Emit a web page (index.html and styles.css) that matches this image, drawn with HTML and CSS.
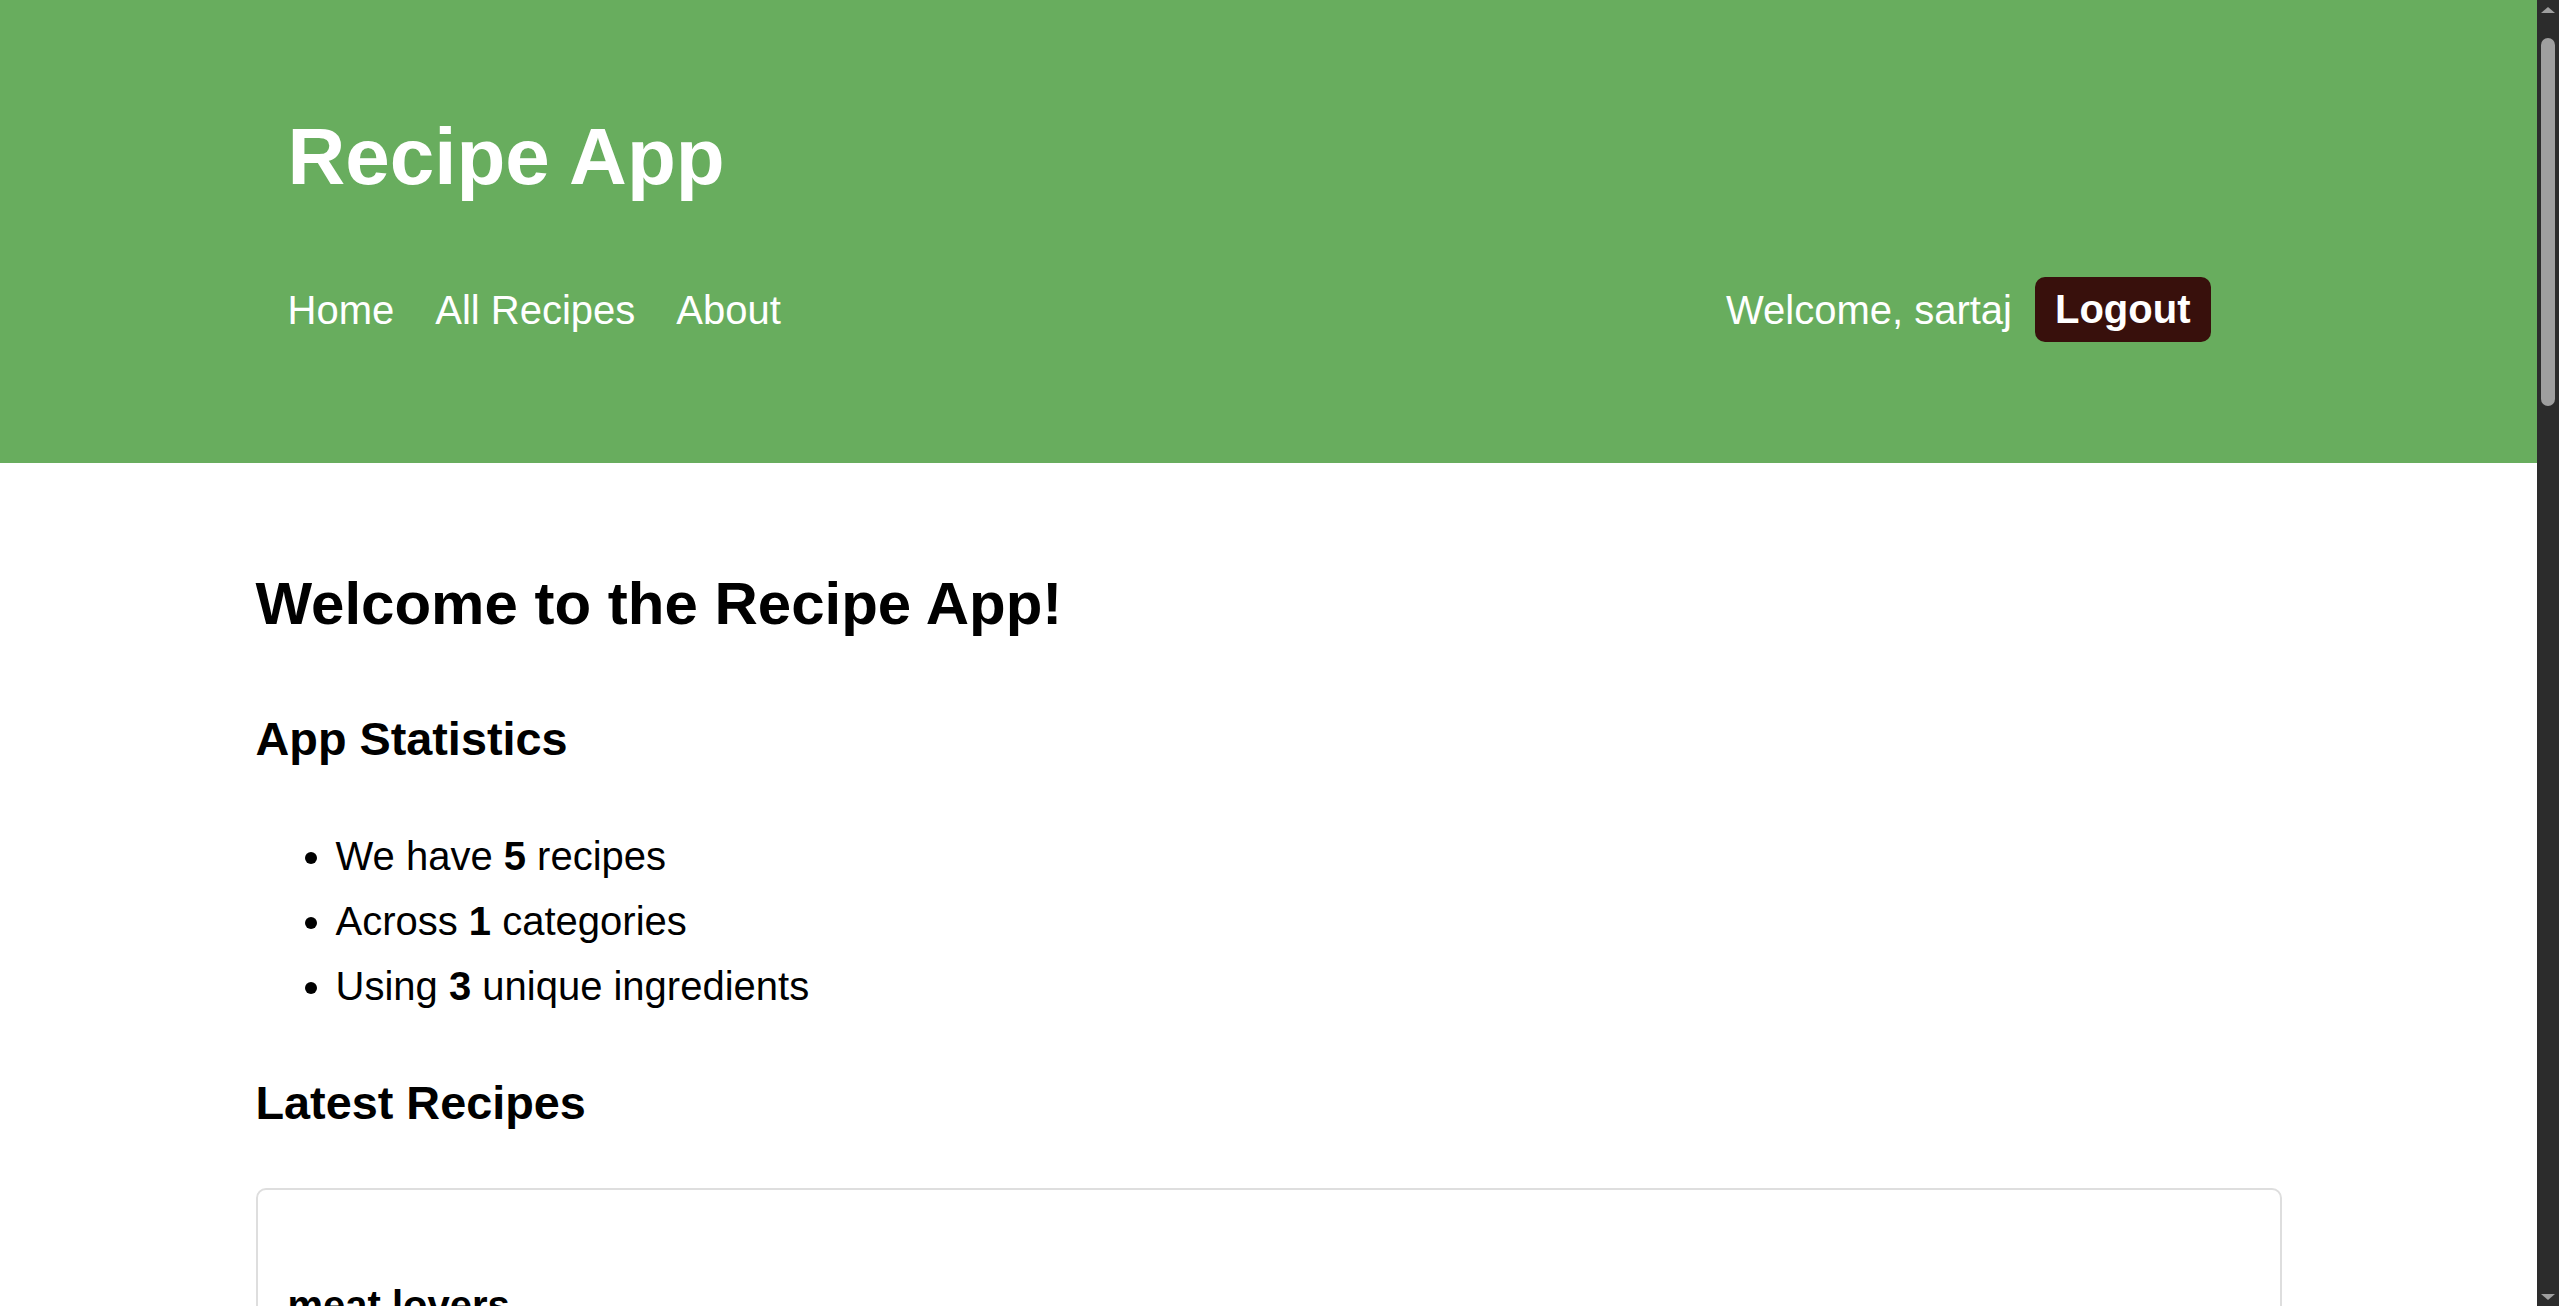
FILE: index.html
```html
<!DOCTYPE html>
<html lang="en">
<head>
<meta charset="utf-8">
<title>Recipe App</title>
<link rel="stylesheet" href="styles.css">
</head>
<body>
<header class="site-header">
  <div class="header-inner">
    <h1 class="brand">Recipe App</h1>
    <nav class="nav">
      <ul class="nav-links">
        <li><a href="#">Home</a></li>
        <li><a href="#">All Recipes</a></li>
        <li><a href="#">About</a></li>
      </ul>
      <div class="user-box">
        <span class="welcome">Welcome, sartaj</span>
        <button class="logout" type="button">Logout</button>
      </div>
    </nav>
  </div>
</header>
<main class="container">
  <h2 class="page-title">Welcome to the Recipe App!</h2>
  <h3 class="section-title">App Statistics</h3>
  <ul class="stats">
    <li>We have <strong>5</strong> recipes</li>
    <li>Across <strong>1</strong> categories</li>
    <li>Using <strong>3</strong> unique ingredients</li>
  </ul>
  <h3 class="section-title">Latest Recipes</h3>
  <div class="recipe-list">
    <article class="recipe-card">
      <h4 class="recipe-name">meat lovers</h4>
      <p class="recipe-desc">A hearty recipe.</p>
    </article>
  </div>
</main>
<div class="fake-scrollbar" aria-hidden="true">
  <span class="sb-arrow sb-up"></span>
  <span class="sb-thumb"></span>
  <span class="sb-arrow sb-down"></span>
</div>
</body>
</html>
```

FILE: styles.css
```css
html, body {
  margin: 0;
  padding: 0;
}

body {
  font-family: "Liberation Sans", Arial, sans-serif;
  font-size: 40px;
  line-height: 1.6;
  color: #000;
  background: #fff;
  padding-right: 22px;
}

.site-header {
  background: #68ad5e;
  color: #fff;
  padding: 40px 0 121px;
}

.header-inner {
  max-width: 2026px;
  margin: 0 auto;
  padding: 0 71px 0 32px;
  box-sizing: border-box;
}

.brand {
  font-size: 80px;
  font-weight: bold;
  margin: 53px 0 56px;
}

.nav {
  display: flex;
  align-items: center;
  justify-content: space-between;
}

.nav-links {
  list-style: none;
  margin: 0;
  padding: 0;
  display: flex;
  gap: 41px;
}

.nav-links a {
  color: #fff;
  text-decoration: none;
}

.user-box {
  display: flex;
  align-items: center;
  gap: 23px;
}

.logout {
  font-family: inherit;
  font-size: 40px;
  font-weight: bold;
  line-height: normal;
  color: #fff;
  background: #38100c;
  border: none;
  border-radius: 10px;
  padding: 10px 20px;
}

.container {
  max-width: 2026px;
  margin: 0 auto;
  padding-top: 43px;
}

.page-title {
  font-size: 60px;
  margin: 50px 0;
}

.section-title {
  font-size: 46.8px;
  margin: 47px 0;
}

.stats {
  margin: 40px 0;
  padding-left: 80px;
}

.stats li {
  line-height: 65px;
}

.recipe-card {
  border: 2px solid #dedede;
  border-radius: 10px;
  padding: 30px;
}

.recipe-name {
  font-size: 40px;
  margin: 53px 0;
}

.recipe-desc {
  margin: 0 0 40px;
}

.fake-scrollbar {
  position: fixed;
  top: 0;
  right: 0;
  width: 22px;
  height: 100vh;
  background: #2c2c2c;
  display: flex;
  flex-direction: column;
  align-items: center;
  box-sizing: border-box;
  padding: 7px 0 6px;
}

.sb-arrow {
  width: 0;
  height: 0;
  border-left: 7px solid transparent;
  border-right: 7px solid transparent;
}

.sb-up {
  border-bottom: 6px solid #9f9f9f;
}

.sb-down {
  border-top: 6px solid #9f9f9f;
  margin-top: auto;
}

.sb-thumb {
  width: 14px;
  height: 368px;
  margin-top: 25px;
  background: #9f9f9f;
  border-radius: 7px;
}
```
